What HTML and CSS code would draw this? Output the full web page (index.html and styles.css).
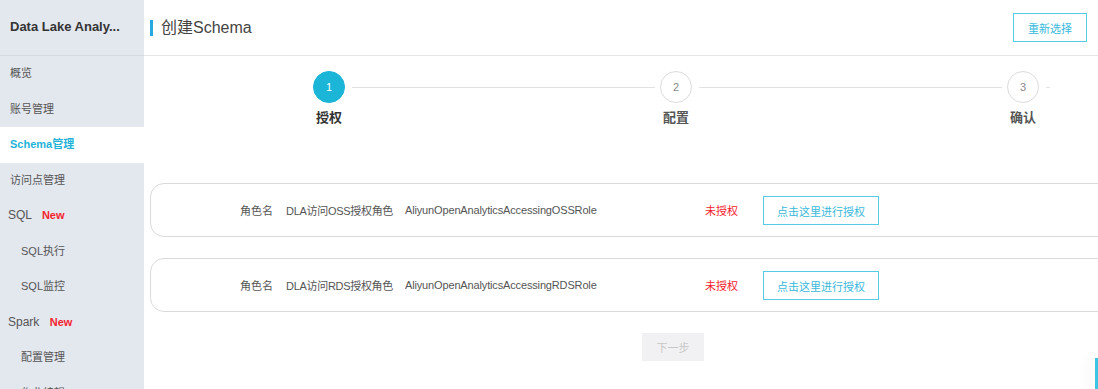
FILE: index.html
```html
<!DOCTYPE html>
<html lang="zh-CN">
<head>
  <meta charset="UTF-8">
  <title>创建Schema - Data Lake Analytics</title>
  <link rel="stylesheet" href="styles.css">
</head>
<body>

<div class="layout">
  <aside class="sidebar">
    <div class="sidebar-title">Data Lake Analy...</div>
    <ul class="menu">
      <li class="menu-item">概览</li>
      <li class="menu-item">账号管理</li>
      <li class="menu-item active">Schema管理</li>
      <li class="menu-item">访问点管理</li>
      <li class="menu-item group">SQL <span class="tag-new">New</span></li>
      <li class="menu-item sub">SQL执行</li>
      <li class="menu-item sub">SQL监控</li>
      <li class="menu-item group">Spark <span class="tag-new">New</span></li>
      <li class="menu-item sub">配置管理</li>
      <li class="menu-item sub">作业编辑</li>
    </ul>
  </aside>

  <main class="main">
    <div class="page-header">
      <h1 class="page-title">创建Schema</h1>
      <button class="btn-outline">重新选择</button>
    </div>

    <div class="steps">
      <div class="step">
        <div class="step-head">
          <span class="step-dot current">1</span>
          <span class="step-label current">授权</span>
        </div>
        <span class="step-line"></span>
      </div>
      <div class="step">
        <div class="step-head">
          <span class="step-dot">2</span>
          <span class="step-label">配置</span>
        </div>
        <span class="step-line"></span>
      </div>
      <div class="step last">
        <div class="step-head">
          <span class="step-dot">3</span>
          <span class="step-label">确认</span>
        </div>
        <span class="step-line"></span>
      </div>
    </div>

    <div class="role-list">
      <div class="role-card">
        <span class="col-key">角色名</span>
        <span class="col-name">DLA访问OSS授权角色</span>
        <span class="col-role">AliyunOpenAnalyticsAccessingOSSRole</span>
        <span class="col-status">未授权</span>
        <button class="btn-outline btn-auth">点击这里进行授权</button>
      </div>
      <div class="role-card">
        <span class="col-key">角色名</span>
        <span class="col-name">DLA访问RDS授权角色</span>
        <span class="col-role">AliyunOpenAnalyticsAccessingRDSRole</span>
        <span class="col-status">未授权</span>
        <button class="btn-outline btn-auth">点击这里进行授权</button>
      </div>
    </div>

    <div class="actions">
      <button class="btn-next" disabled>下一步</button>
    </div>
  </main>
</div>

<div class="side-widget"></div>

</body>
</html>
```

FILE: styles.css
```css
body {
  margin: 0;
  width: 1098px;
  height: 389px;
  overflow: hidden;
  background: #fff;
  font-family: "Liberation Sans", "Noto Sans CJK SC", sans-serif;
  color: #333;
}

.layout {
  display: flex;
  height: 389px;
}

/* sidebar */
.sidebar {
  width: 144px;
  flex-shrink: 0;
  background: #e3e7ee;
}

.sidebar-title {
  height: 55px;
  line-height: 54px;
  padding-left: 10px;
  font-size: 13px;
  font-weight: bold;
  color: #333;
  border-bottom: 1px solid #d6d9df;
  white-space: nowrap;
}

.menu {
  list-style: none;
  margin: 0;
  padding: 0;
}

.menu-item {
  height: 35.5px;
  line-height: 35.5px;
  padding-left: 10px;
  font-size: 11px;
  color: #555;
  white-space: nowrap;
}

.menu-item.group {
  padding-left: 8px;
  font-size: 12px;
}

.menu-item.sub {
  padding-left: 21px;
}

.menu-item.active {
  background: #fff;
  color: #1fb3d8;
  font-weight: bold;
}

.tag-new {
  margin-left: 7px;
  color: #f5222d;
  font-weight: bold;
  font-size: 11px;
}

/* main */
.main {
  flex: 1;
  min-width: 0;
}

.page-header {
  height: 55px;
  display: flex;
  align-items: center;
  justify-content: space-between;
  padding: 0 11px 0 6px;
  border-bottom: 1px solid #e6e6e6;
}

.page-title {
  margin: 0;
  padding-left: 8px;
  border-left: 3px solid #2aa8e0;
  font-size: 16px;
  font-weight: normal;
  line-height: 16px;
  color: #444;
}

.btn-outline {
  height: 29px;
  padding: 0 14px;
  background: #fff;
  border: 1px solid #56cbe6;
  color: #3ab9db;
  font-family: inherit;
  font-size: 11px;
}

/* steps */
.steps {
  display: flex;
  padding: 15px 0 0 169px;
  height: 127px;
  box-sizing: border-box;
}

.step {
  width: 347px;
  display: flex;
  align-items: flex-start;
  flex-shrink: 0;
}

.step-head {
  width: 32px;
  display: flex;
  flex-direction: column;
  align-items: center;
  flex-shrink: 0;
}

.step-dot {
  width: 30px;
  height: 30px;
  border-radius: 50%;
  border: 1px solid #dcdcdc;
  background: #fff;
  color: #888;
  font-size: 11px;
  display: flex;
  align-items: center;
  justify-content: center;
}

.step-dot.current {
  background: #1bb5d8;
  border-color: #1bb5d8;
  color: #fff;
}

.step-label {
  margin-top: 4px;
  font-size: 13px;
  font-weight: bold;
  color: #555;
  white-space: nowrap;
}

.step-label.current {
  color: #333;
}

.step-line {
  flex: 1;
  height: 1px;
  margin: 16px 5px 0 7px;
  background: #e2e2e2;
}

.step.last .step-line {
  flex: none;
  width: 4px;
}

/* role cards */
.role-list {
  display: flex;
  flex-direction: column;
  gap: 21px;
  padding-left: 6px;
}

.role-card {
  width: 1000px;
  height: 54px;
  box-sizing: border-box;
  border: 1px solid #dadada;
  border-radius: 14px;
  display: flex;
  align-items: center;
  padding-left: 89px;
  font-size: 11px;
  color: #555;
  white-space: nowrap;
}

.col-key {
  width: 46px;
}

.col-name {
  width: 119px;
  letter-spacing: -0.3px;
}

.col-role {
  width: 300px;
  letter-spacing: -0.15px;
}

.col-status {
  width: 58px;
  color: #f5222d;
}

.btn-auth {
  width: 116px;
  height: 29px;
  margin-top: 1px;
  padding: 0;
}

/* footer action */
.actions {
  padding: 21px 0 0 498px;
}

.btn-next {
  width: 62px;
  height: 28px;
  border: none;
  background: #f1f1f3;
  color: #c8c8c8;
  font-family: inherit;
  font-size: 11px;
}

.side-widget {
  position: fixed;
  right: 0;
  top: 358px;
  width: 3px;
  height: 40px;
  background: #3cc4e4;
  box-shadow: -6px 0 12px rgba(0, 0, 0, 0.08);
}
```
